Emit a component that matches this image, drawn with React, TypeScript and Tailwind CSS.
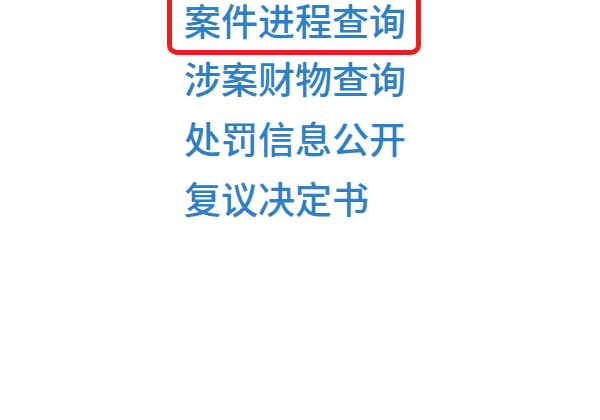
const items = ["涉案财物查询", "处罚信息公开", "复议决定书"];

export default function App() {
  return (
    <div
      className="w-[600px] h-[420px] bg-white overflow-hidden"
      style={{ fontFamily: '"Noto Sans CJK SC", "Noto Sans", sans-serif' }}
    >
      <div className="ml-[167px] flex flex-col items-start text-[37px] font-medium text-[#2f80c5]">
        <div className="-mt-[15px] -mb-[7px] border-[5px] border-[#ea1f1f] rounded-[10px] pl-[12px] pr-[10px] leading-[60px]">
          案件进程查询
        </div>
        {items.map((t) => (
          <div key={t} className="pl-[17px] leading-[60px]">
            {t}
          </div>
        ))}
      </div>
    </div>
  );
}
